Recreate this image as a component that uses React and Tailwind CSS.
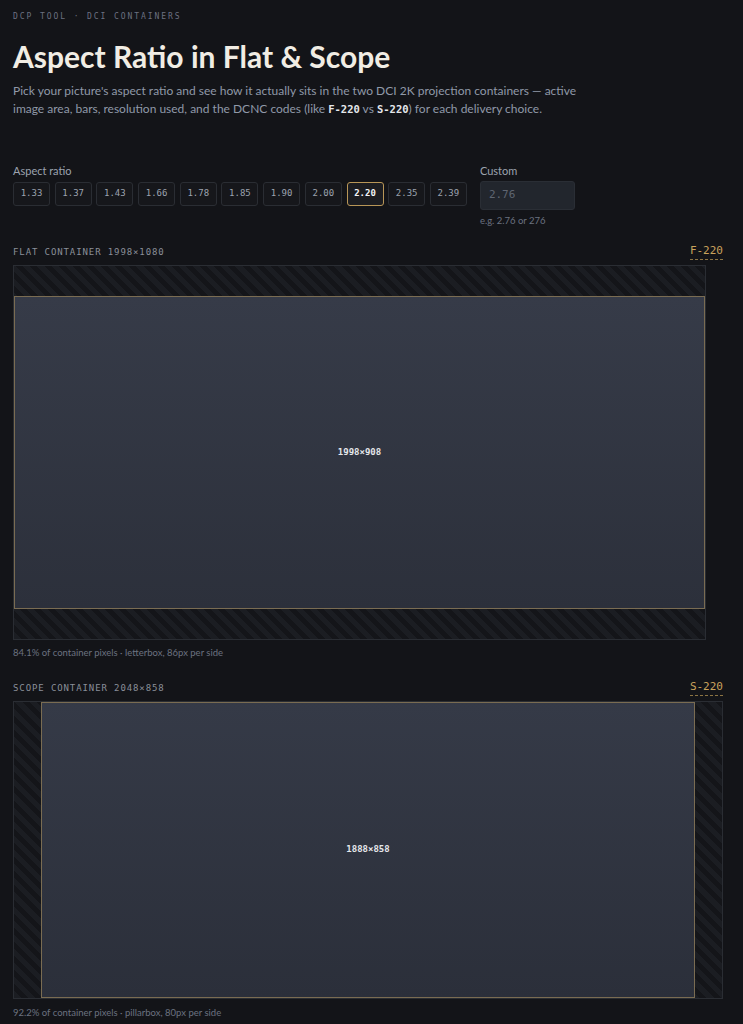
import React from "react";

const ratios = ["1.33", "1.37", "1.43", "1.66", "1.78", "1.85", "1.90", "2.00", "2.20", "2.35", "2.39"];
const mono = { fontFamily: '"DejaVu Sans Mono", "Liberation Mono", monospace' };
const sans = { fontFamily: 'Lato, "Noto Sans", sans-serif' };
const hatch = "bg-[repeating-linear-gradient(45deg,#1b1d22_0px,#1b1d22_5px,#141519_5px,#141519_10px)]";

function Header({ label, code }) {
  return (
    <div className="flex items-end justify-between h-[14px]">
      <div className="text-[9px] tracking-[0.1em] text-[#8a8f99] leading-none" style={mono}>{label}</div>
      <div className="-mb-[3px] text-[11px] text-[#c9a35c] leading-none pb-[3px] border-b border-dashed border-[#8c7443]" style={mono}>{code}</div>
    </div>
  );
}

export default function App() {
  return (
    <div className="min-h-[1024px] bg-[#131418] pl-[13px] pt-[12px] text-[#d1d5db]" style={sans}>
      <div className="w-[710px]">
        <div className="text-[8px] tracking-[0.24em] text-[#6b7080] leading-[10px]" style={mono}>DCP TOOL · DCI CONTAINERS</div>
        <h1 className="mt-[16px] text-[30px] font-bold leading-[36px] text-[#f1ede4]">Aspect Ratio in Flat &amp; Scope</h1>
        <p className="mt-[8px] max-w-[566px] text-[12px] leading-[18px] text-[#9099a8]">
          Pick your picture's aspect ratio and see how it actually sits in the two DCI 2K projection containers — active image area, bars, resolution used, and the DCNC codes (like <code className="text-[10.5px] leading-none font-bold text-[#e5e7eb]" style={mono}>F-220</code> vs <code className="text-[10.5px] leading-none font-bold text-[#e5e7eb]" style={mono}>S-220</code>) for each delivery choice.
        </p>

        <div className="mt-[46px] flex gap-[13px]">
          <div>
            <div className="text-[11px] leading-[14px] text-[#9ca3af]">Aspect ratio</div>
            <div className="mt-[4px] flex gap-[4.7px]">
              {ratios.map((r) => (
                <div
                  key={r}
                  className={
                    r === "2.20"
                      ? "w-[37px] h-[24px] flex items-center justify-center rounded-[3px] border border-[#b89657] bg-[#1c1d21] text-[9px] font-bold text-[#f3f4f6]"
                      : "w-[37px] h-[24px] flex items-center justify-center rounded-[3px] border border-[#2a2d33] bg-[#16171b] text-[9px] text-[#9ca3af]"
                  }
                  style={mono}
                >
                  {r}
                </div>
              ))}
            </div>
          </div>
          <div>
            <div className="text-[11px] leading-[14px] text-[#9ca3af]">Custom</div>
            <div className="mt-[3px] w-[95px] h-[29px] rounded-[3px] border border-[#2a2e35] bg-[#22262d] flex items-center px-[8px] text-[11px] text-[#5f6571]" style={mono}>2.76</div>
            <div className="mt-[5px] text-[9.5px] leading-[12px] text-[#6b7280]">e.g. 2.76 or 276</div>
          </div>
        </div>

        <div className="mt-[16px]">
          <Header label="FLAT CONTAINER 1998×1080" code="F-220" />
          <div className={`mt-[8px] w-[693px] h-[375px] border border-[#2a2d33] ${hatch} flex flex-col justify-center`}>
            <div className="h-[313px] border border-[#7a6c52] bg-gradient-to-b from-[#363b48] to-[#2c303b] flex items-center justify-center">
              <span className="text-[9px] font-bold text-[#e5e7eb]" style={mono}>1998×908</span>
            </div>
          </div>
          <div className="mt-[7px] text-[9.5px] leading-[12px] text-[#6b7280]">84.1% of container pixels · letterbox, 86px per side</div>
        </div>

        <div className="mt-[20px]">
          <Header label="SCOPE CONTAINER 2048×858" code="S-220" />
          <div className={`mt-[8px] w-[710px] h-[298px] border border-[#2a2d33] ${hatch} flex justify-center`}>
            <div className="w-[654px] border border-[#7a6c52] bg-gradient-to-b from-[#353a47] to-[#2b2f3a] flex items-center justify-center">
              <span className="text-[9px] font-bold text-[#e5e7eb]" style={mono}>1888×858</span>
            </div>
          </div>
          <div className="mt-[8px] text-[9.5px] leading-[12px] text-[#6b7280]">92.2% of container pixels · pillarbox, 80px per side</div>
        </div>
      </div>
    </div>
  );
}
